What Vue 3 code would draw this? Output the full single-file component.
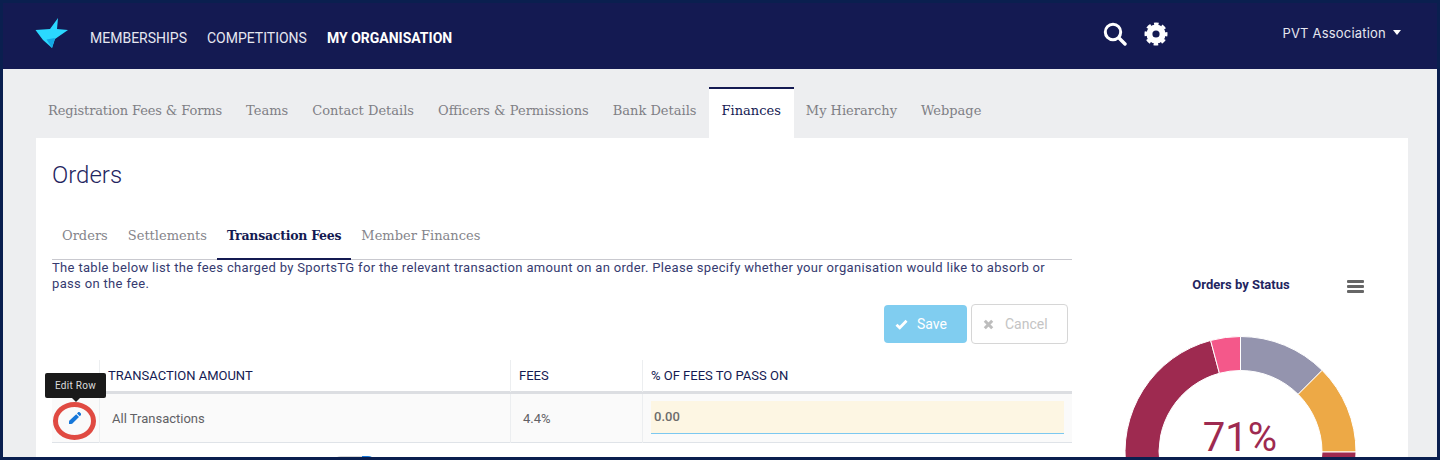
<template>
  <div class="frame">
    <header class="topbar">
      <svg class="logo" width="34" height="31" viewBox="0 0 34 31">
        <polygon points="0.500,12 15,11 23,0 22,11 33,12 20,21 17,30 8,22" fill="#2bd9ff" />
        <polygon points="11.500,21.500 20,20 17,30" fill="#14a9e6" />
      </svg>
      <nav class="mainnav">
        <a v-for="item in mainNav" :key="item.label" :class="{ on: item.on }">{{ item.label }}</a>
      </nav>
      <div class="tools">
        <svg width="24" height="24" viewBox="0 0 24 24">
          <circle cx="10" cy="10" r="7.700" fill="none" stroke="#fff" stroke-width="3" />
          <path d="M16 16l6 6" stroke="#fff" stroke-width="3.400" stroke-linecap="round" />
        </svg>
        <svg width="24" height="24" viewBox="0 0 24 24">
          <circle cx="12" cy="12" r="6.600" fill="none" stroke="#fff" stroke-width="6" />
          <circle cx="12" cy="12" r="10.200" fill="none" stroke="#fff" stroke-width="2.600" stroke-dasharray="4.600 3.410" stroke-dashoffset="2.300" />
        </svg>
      </div>
      <div class="org">PVT Association <span class="caret"></span></div>
    </header>

    <main class="content">
      <nav class="pagetabs">
        <a v-for="tab in pageTabs" :key="tab" :class="{ on: tab === 'Finances' }">{{ tab }}</a>
      </nav>
      <section class="card">
        <h1>Orders</h1>
        <div class="cols">
          <div class="left">
            <nav class="subtabs">
              <a v-for="tab in subTabs" :key="tab" :class="{ on: tab === 'Transaction Fees' }">{{ tab }}</a>
            </nav>
            <p class="intro">The table below list the fees charged by SportsTG for the relevant transaction amount on an order. Please specify whether your organisation would like to absorb or pass on the fee.</p>
            <div class="actions">
              <button class="btn save">
                <svg width="13" height="11" viewBox="0 0 14 12"><path d="M1.500 6.200l3.600 3.400 7.400-7.600" fill="none" stroke="#fff" stroke-width="3" /></svg>
                Save
              </button>
              <button class="btn cancel">
                <svg width="11" height="11" viewBox="0 0 11 11"><path d="M1.800 1.800l7.400 7.400M9.200 1.800l-7.400 7.400" fill="none" stroke="#bdbdbd" stroke-width="3" /></svg>
                Cancel
              </button>
            </div>
            <div class="table">
              <div class="row head">
                <div class="c0"></div>
                <div class="c1">TRANSACTION AMOUNT</div>
                <div class="c2">FEES</div>
                <div class="c3">% OF FEES TO PASS ON</div>
              </div>
              <div class="row body">
                <div class="c0">
                  <span class="tip">Edit Row</span>
                  <span class="ring"></span>
                  <svg width="12" height="12" viewBox="0 0 12 12">
                    <path fill="#1677d9" d="M7.200 2.200l2.800 2.800-6.800 6.800-3.600.6.600-3.600zM8 1.400l.9-.9c.6-.6 1.400-.6 2 0l.8.8c.6.600.6 1.400 0 2l-.9.900z" />
                  </svg>
                </div>
                <div class="c1">All Transactions</div>
                <div class="c2">4.4%</div>
                <div class="c3"><div class="field">0.00</div></div>
              </div>
            </div>
            <div class="toggle"></div>
          </div>
          <aside class="right">
            <div class="charthead">
              <span>Orders by Status</span>
              <div class="burger"><i></i><i></i><i></i></div>
            </div>
            <div class="donut">
              <svg width="232" height="232" viewBox="-116.500 -116 232 232">
                <path v-for="seg in segments" :key="seg.color" :d="seg.d" :fill="seg.color" stroke="#fff" stroke-width="1" />
              </svg>
              <div class="pct">71%</div>
            </div>
          </aside>
        </div>
      </section>
    </main>
  </div>
</template>

<script setup>
const mainNav = [
  { label: 'MEMBERSHIPS' },
  { label: 'COMPETITIONS' },
  { label: 'MY ORGANISATION', on: true }
]
const pageTabs = ['Registration Fees & Forms', 'Teams', 'Contact Details', 'Officers & Permissions', 'Bank Details', 'Finances', 'My Hierarchy', 'Webpage']
const subTabs = ['Orders', 'Settlements', 'Transaction Fees', 'Member Finances']

// donut slices, degrees clockwise from 12 o'clock
const arc = (from, to, r1, r2) => {
  const pt = (a, r) => {
    const t = (a - 90) * Math.PI / 180
    return `${(r * Math.cos(t)).toFixed(2)} ${(r * Math.sin(t)).toFixed(2)}`
  }
  const big = to - from > 180 ? 1 : 0
  return `M${pt(from, r2)}A${r2} ${r2} 0 ${big} 1 ${pt(to, r2)}L${pt(to, r1)}A${r1} ${r1} 0 ${big} 0 ${pt(from, r1)}Z`
}
const segments = [
  { from: 0, to: 45, color: '#9494ae' },
  { from: 45, to: 90, color: '#eda946' },
  { from: 90, to: 345, color: '#9e2a50' },
  { from: 345, to: 360, color: '#f4588a' }
].map(s => ({ color: s.color, d: arc(s.from, s.to, 81.500, 115.500) }))
</script>

<style>
html, body { margin: 0; height: 460px; overflow: hidden; background: #fff; }
</style>

<style scoped>
.frame {
  box-sizing: border-box;
  width: 1440px;
  height: 460px;
  overflow: hidden;
  border: 3px solid #0a1f4f;
  background: #edeef0;
  font-family: Roboto, sans-serif;
  color: #141a52;
  position: relative;
}
.topbar {
  height: 66px;
  background: #141a52;
  display: flex;
  align-items: center;
  color: #fff;
}
.logo { margin-left: 32px; margin-top: -5px; }
.mainnav { display: flex; gap: 20px; margin-left: 21px; margin-top: 3px; font-size: 14px; }
.mainnav a { color: #e6e7f0; }
.mainnav a.on { color: #fff; font-weight: 700; }
.tools { display: flex; gap: 17px; align-items: center; margin-left: 651px; margin-top: -5px; }
.org { margin-left: auto; margin-right: 36px; margin-top: -7px; font-family: Inter, sans-serif; font-size: 13px; letter-spacing: .2px; color: #e6e7f0; display: flex; align-items: center; gap: 7px; }
.caret { width: 0; height: 0; border: 4px solid transparent; border-top: 5px solid #fff; border-bottom: 0; }

.content { padding: 18px 29px 0 33px; }
.pagetabs { display: flex; height: 51px; }
.pagetabs a {
  box-sizing: border-box;
  padding: 0 12px;
  line-height: 43px;
  font-family: "DejaVu Serif", serif;
  font-size: 13px;
  color: #7f7f85;
  border-top: 2px solid transparent;
}
.pagetabs a:first-child { letter-spacing: -.12px; }
.pagetabs a.on { padding: 0 13px; background: #fff; color: #141a52; border-top-color: #141a52; }

.card { background: #fff; padding: 0 16px; height: 330px; }
h1 { margin: 0; padding-top: 23px; font-size: 24px; line-height: 28px; font-weight: 300; color: #1f2560; }
.cols { display: flex; margin-top: 21px; }
.left { width: 1020px; position: relative; }

.subtabs { display: flex; border-bottom: 1px solid #c9c9cf; height: 50px; box-sizing: border-box; }
.subtabs a {
  box-sizing: border-box;
  height: 50px;
  padding: 0 10px;
  line-height: 51px;
  font-family: "DejaVu Serif", serif;
  font-size: 13px;
  color: #85858b;
}
.subtabs a.on { color: #141a52; font-weight: 700; font-size: 12.500px; letter-spacing: -.25px; border-bottom: 2px solid #141a52; }
.intro { margin: 0; font-size: 13px; line-height: 16px; letter-spacing: .335px; color: #363b70; width: 1010px; }

.actions { display: flex; justify-content: flex-end; gap: 4px; margin-top: 12px; padding-right: 4px; align-items: center; }
.btn { height: 38px; box-sizing: border-box; border-radius: 4px; font-family: Roboto, sans-serif; font-size: 14px; display: flex; align-items: center; gap: 9px; padding: 0 11px; }
.save { width: 83px; border: 0; background: #80cdf0; color: #fff; }
.cancel { width: 97px; height: 40px; gap: 11px; border: 1px solid #d6d6d6; background: #fff; color: #c4c4c4; }

.table { margin-top: 16px; width: 1020px; }
.row { display: grid; grid-template-columns: 47px 411px 132px 430px; }
.row > div { box-sizing: border-box; border-left: 1px solid #eceef0; }
.row > div:first-child { border-left: 0; }
.head { height: 31px; line-height: 32px; font-size: 13px; border-bottom: 3px solid #dcdee2; }
.head > div { padding-left: 8px; }
.body { height: 48px; background: #fafafa; border-bottom: 1px solid #dfe3e8; font-size: 13px; color: #616165; line-height: 49px; }
.body .c1 { padding-left: 12px; }
.body .c2 { padding-left: 12px; }
.body .c3 { padding: 7px 8px 0; }
.field { box-sizing: border-box; height: 33px; line-height: 32px; background: #fdf6e3; border-bottom: 1px solid #7cc8f0; padding-left: 3px; font-weight: 500; color: #6c6c6c; }
.c0 { position: relative; display: flex; align-items: center; justify-content: center; }
.c0 svg { margin: 0 2px 2px 0; }
.ring { position: absolute; left: 1px; top: 8px; width: 33px; height: 28px; border: 5px solid #e04a42; border-radius: 50%; }
.tip { position: absolute; left: -7px; top: -21px; width: 61px; height: 25px; line-height: 25px; background: #1a1a1a; color: #ddd; font-size: 10px; letter-spacing: .3px; text-align: center; border-radius: 2px; z-index: 2; }
.tip::after { content: ""; position: absolute; left: 27px; top: 25px; border: 4px solid transparent; border-top-color: #1a1a1a; border-bottom: 0; }
.toggle { position: absolute; left: 281px; top: 246px; width: 43px; height: 8px; border-radius: 8px 8px 0 0; background: linear-gradient(90deg, #d8d8d8 67%, #1677d9 67%); }

.right { flex: 1; }
.charthead { position: relative; margin-top: 67px; padding-left: 18px; text-align: center; font-size: 13px; font-weight: 700; line-height: 16px; color: #1f2560; }
.burger { position: absolute; right: 28px; top: 3px; width: 17px; display: flex; flex-direction: column; gap: 2px; }
.burger i { height: 3px; background: #666; border-radius: 1px; }
.donut { position: relative; width: 232px; margin: 43px 0 0 52px; }
.donut svg { display: block; }
.pct { position: absolute; left: 0; right: 0; top: 82px; text-align: center; font-size: 40px; line-height: 40px; color: #9e2a50; }
</style>
